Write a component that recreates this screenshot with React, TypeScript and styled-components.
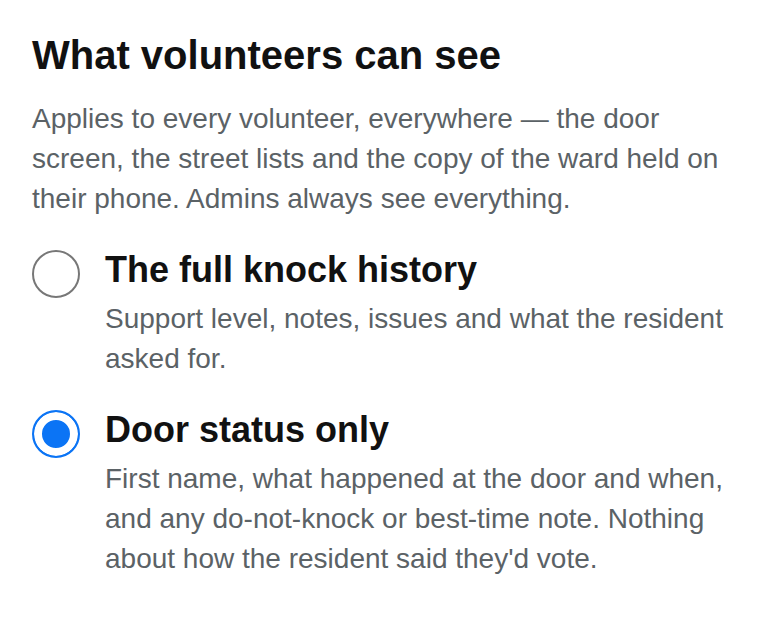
import React, { useState } from "react";
import styled, { createGlobalStyle } from "styled-components";

const GlobalStyle = createGlobalStyle`
  body {
    margin: 0;
    background: #ffffff;
    font-family: "Liberation Sans", Arial, sans-serif;
  }
`;

const options = [
  {
    id: "full",
    title: "The full knock history",
    text: "Support level, notes, issues and what the resident asked for.",
  },
  {
    id: "door",
    title: "Door status only",
    text: "First name, what happened at the door and when, and any do-not-knock or best-time note. Nothing about how the resident said they'd vote.",
  },
];

function App() {
  const [selected, setSelected] = useState("door");

  return (
    <>
      <GlobalStyle />
      <Page>
        <Heading>What volunteers can see</Heading>
        <Intro>
          Applies to every volunteer, everywhere — the door screen, the street
          lists and the copy of the ward held on their phone. Admins always see
          everything.
        </Intro>
        <OptionList role="radiogroup">
          {options.map((option) => (
            <Option key={option.id} onClick={() => setSelected(option.id)}>
              <Radio
                role="radio"
                aria-checked={selected === option.id}
                checked={selected === option.id}
              />
              <OptionBody>
                <OptionTitle>{option.title}</OptionTitle>
                <OptionText>{option.text}</OptionText>
              </OptionBody>
            </Option>
          ))}
        </OptionList>
      </Page>
    </>
  );
}

const Page = styled.div`
  padding: 31px 32px 32px;
  max-width: 710px;
`;

const Heading = styled.h1`
  margin: 0;
  font-size: 40px;
  line-height: 48px;
  font-weight: bold;
  color: #111111;
`;

const Intro = styled.p`
  margin: 20px 0 0;
  font-size: 28px;
  line-height: 40px;
  color: #5b6266;
`;

const OptionList = styled.div`
  display: flex;
  flex-direction: column;
  gap: 29px;
  margin-top: 29px;
`;

const Option = styled.label`
  display: flex;
  align-items: flex-start;
  gap: 25px;
  cursor: pointer;
`;

const Radio = styled.span<{ checked: boolean }>`
  flex: none;
  box-sizing: border-box;
  width: 48px;
  height: 48px;
  margin-top: 2px;
  border-radius: 50%;
  border: 2px solid ${(p) => (p.checked ? "#0b74f5" : "#777777")};
  background: ${(p) => (p.checked ? "#0b74f5" : "#ffffff")};
  box-shadow: ${(p) => (p.checked ? "inset 0 0 0 8px #ffffff" : "none")};
`;

const OptionBody = styled.div`
  display: flex;
  flex-direction: column;
  gap: 7px;
`;

const OptionTitle = styled.div`
  font-size: 36px;
  line-height: 44px;
  font-weight: bold;
  color: #111111;
`;

const OptionText = styled.div`
  font-size: 28px;
  line-height: 40px;
  color: #5b6266;
`;

export default App;
